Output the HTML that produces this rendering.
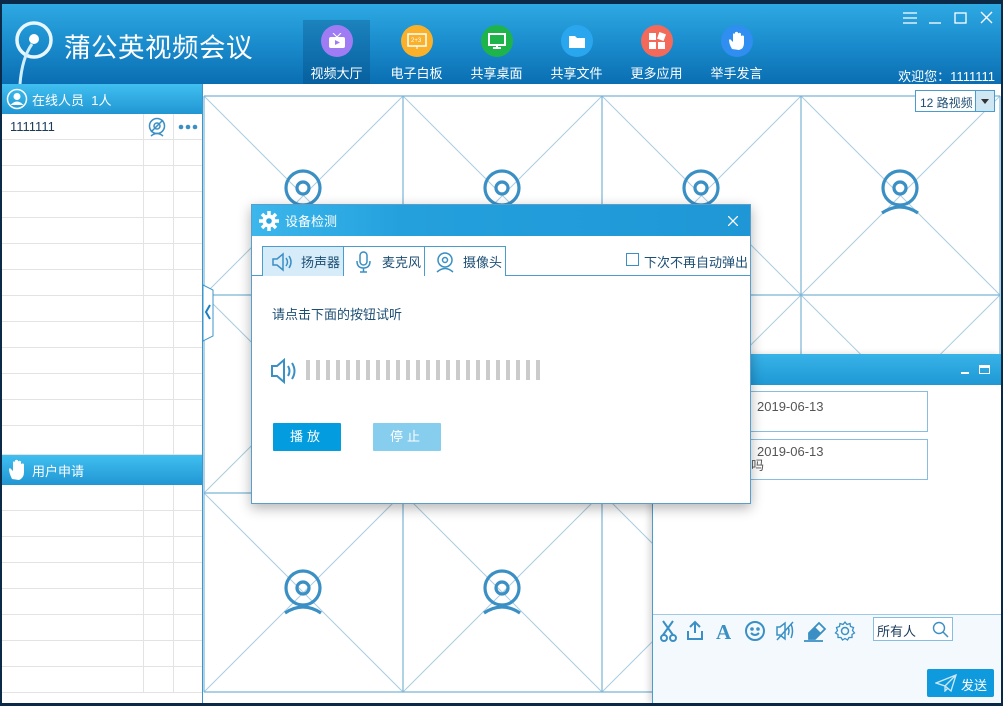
<!DOCTYPE html>
<html><head><meta charset="utf-8"><style>
*{margin:0;padding:0;box-sizing:border-box}
body{width:1003px;height:706px;overflow:hidden;background:#0b2a48;font-family:"Liberation Sans","Noto Sans CJK SC",sans-serif;position:relative}
.abs{position:absolute}
#hdr{left:2px;top:4px;width:999px;height:80px;background:linear-gradient(180deg,#2ea9e2 0%,#1a8ccd 50%,#0a6eb2 100%)}
.tool{position:absolute;top:16px;width:67px;height:64px;text-align:center;color:#fff;font-size:13px}
.tool .c{width:32px;height:32px;border-radius:50%;margin:5px auto 6px;display:flex;align-items:center;justify-content:center}
.lhd{background:linear-gradient(180deg,#40bff0,#2196d3);color:#fff;font-size:13px;height:30px;display:flex;align-items:center}
.row{height:26px;border-bottom:1px solid #e3e3e3;position:relative}
.row:before{content:"";position:absolute;left:141px;top:0;bottom:0;border-left:1px solid #e3e3e3}
.row:after{content:"";position:absolute;left:171px;top:0;bottom:0;border-left:1px solid #e3e3e3}
.tab{position:absolute;top:246px;height:30px;width:82px;border:1px solid #4a9ccc;border-bottom:none;font-size:13px;color:#1d4e73;display:flex;align-items:center;padding-left:8px;gap:6px;background:#fff}
</style></head><body>
<div id="hdr" class="abs">
 <svg class="abs" style="left:10px;top:14px" width="44" height="70" viewBox="0 0 44 70"><circle cx="22" cy="22" r="17" fill="none" stroke="#e8f6ff" stroke-width="3.5"/><circle cx="22" cy="21" r="5" fill="#fff"/><path d="M20 26 Q10 40 8 66" fill="none" stroke="#cfeeff" stroke-width="3"/></svg>
 <div class="abs" style="left:62px;top:22px;color:#fff;font-size:26.5px;letter-spacing:0.5px">蒲公英视频会议</div>
 <div class="abs" style="left:301px;top:16px;width:67px;height:64px;background:rgba(0,50,100,.25)"></div>
 <div class="tool" style="left:301px"><div class="c" style="background:#a07cf4"><svg width="18" height="16"><rect x="1" y="4" width="16" height="11" rx="2" fill="#fff"/><path d="M5 0 L9 4 L13 0" stroke="#fff" fill="none"/><path d="M7 7 L12 9.5 L7 12Z" fill="#a07cf4"/></svg></div>视频大厅</div>
 <div class="tool" style="left:381px"><div class="c" style="background:#fbb02a"><svg width="20" height="16"><rect x="1" y="1" width="18" height="12" fill="none" stroke="#fff" stroke-width="1.5"/><text x="4" y="9" font-size="6" fill="#fff" font-family="Liberation Sans">2+3</text><path d="M10 13v3" stroke="#fff"/></svg></div>电子白板</div>
 <div class="tool" style="left:461px"><div class="c" style="background:#1fb34c"><svg width="18" height="16"><rect x="1" y="1" width="16" height="11" fill="none" stroke="#fff" stroke-width="2"/><path d="M9 12v3M5 15h8" stroke="#fff" stroke-width="2"/></svg></div>共享桌面</div>
 <div class="tool" style="left:541px"><div class="c" style="background:#2aa6ef"><svg width="18" height="15"><path d="M1 2h6l2 2h8v10H1Z" fill="#fff"/></svg></div>共享文件</div>
 <div class="tool" style="left:621px"><div class="c" style="background:#f36a5a"><svg width="18" height="18"><rect x="1" y="1" width="7" height="7" fill="#fff"/><rect x="1" y="10" width="7" height="7" fill="#fff"/><rect x="10" y="10" width="7" height="7" fill="#fff"/><rect x="10" y="1" width="7" height="7" fill="#fff" transform="rotate(20 13.5 4.5)"/></svg></div>更多应用</div>
 <div class="tool" style="left:701px"><div class="c" style="background:#2f8ef0"><svg width="18" height="20"><path d="M4 18 Q1 13 1 9 L2 8 L5 11 V3 Q6 1.5 7 3 V9 V1.5 Q8.5 0 10 1.5V9V2.5Q11.5 1 13 2.5V10V5Q14.5 4 16 5V12Q16 18 11 19Z" fill="#fff"/></svg></div>举手发言</div>
 <svg class="abs" style="left:898px;top:6px" width="100" height="16"><g stroke="#fff" stroke-width="1.3" fill="none"><path d="M3 3H17M3 8H17M3 13H17"/><path d="M29 13H41"/><rect x="55" y="3" width="11" height="10"/><path d="M81 2L92 13M92 2L81 13"/></g></svg>
 <div class="abs" style="right:6px;top:62px;color:#fff;font-size:13px">欢迎您：1111111</div>
</div>
<div class="abs" style="left:2px;top:84px;width:201px;height:619px;background:#fff;border-right:1px solid #3c95cc">
 <div class="lhd"><svg width="22" height="22" style="margin:0 4px"><circle cx="11" cy="11" r="9.5" fill="none" stroke="#fff" stroke-width="1.5"/><circle cx="11" cy="8.5" r="3.5" fill="#fff"/><path d="M4.5 17Q11 10 17.5 17" fill="#fff"/></svg>在线人员&nbsp;&nbsp;1人</div>
 <div class="row" style="font-size:13px;color:#1b3a5a;padding:5px 0 0 8px">1111111
  <svg class="abs" style="left:145px;top:3px" width="20" height="20"><circle cx="10" cy="9" r="7.5" fill="none" stroke="#3a8fc4" stroke-width="1.5"/><circle cx="10" cy="9" r="3" fill="none" stroke="#3a8fc4" stroke-width="1.5"/><path d="M4 15L16 3M4 19Q10 14 16 19" stroke="#3a8fc4" fill="none" stroke-width="1.5"/></svg>
  <svg class="abs" style="left:176px;top:10px" width="20" height="6"><circle cx="3" cy="3" r="2.3" fill="#3a8fc4"/><circle cx="10" cy="3" r="2.3" fill="#3a8fc4"/><circle cx="17" cy="3" r="2.3" fill="#3a8fc4"/></svg></div>
 <div class="row"></div><div class="row"></div><div class="row"></div><div class="row"></div><div class="row"></div><div class="row"></div><div class="row"></div><div class="row"></div><div class="row"></div><div class="row"></div><div class="row"></div><div class="row" style="height:29px"></div>
 <div class="lhd"><svg width="20" height="22" style="margin:0 4px 0 6px"><path d="M4 20 Q1 14 1 10 L2 9 L5 12 V3 Q6 1.5 7 3 V10 V1.5 Q8.5 0 10 1.5V10V2.5Q11.5 1 13 2.5V11V5Q14.5 4 16 5V13Q16 19 11 21Z" fill="#fff"/></svg>用户申请</div>
 <div class="row"></div><div class="row"></div><div class="row"></div><div class="row"></div><div class="row"></div><div class="row"></div><div class="row"></div><div class="row"></div>
</div>
<div class="abs" style="left:203px;top:84px;width:798px;height:619px;background:#fff"></div>
<svg class="abs" style="left:0;top:0" width="1003" height="706">
 <defs><g id="cam" fill="none" stroke="#3a8fc4" stroke-width="3.2"><circle cx="0" cy="0" r="17"/><circle cx="0" cy="0" r="6"/><path d="M-18 25Q0 13 18 25"/></g></defs>
 <g stroke="#a9cde0" stroke-width="1">
  <path d="M204 96L403 295M403 96L204 295M403 96L602 295M602 96L403 295M602 96L801 295M801 96L602 295M801 96L1000 295M1000 96L801 295"/>
  <path d="M204 295L403 493M403 295L204 493M403 295L602 493M602 295L403 493M602 295L801 493M801 295L602 493M801 295L1000 493M1000 295L801 493"/>
  <path d="M204 493L403 692M403 493L204 692M403 493L602 692M602 493L403 692M602 493L801 692M801 493L602 692"/>
 </g>
 <g stroke="#7ab3d3" stroke-width="1.2" fill="none">
  <path d="M204 96H1000M204 295H1000M204 493H1000M204 692H1000M204 96V692M403 96V692M602 96V692M801 96V692M1000 96V692"/>
 </g>
 <use href="#cam" transform="translate(303,188)"/><use href="#cam" transform="translate(502,188)"/><use href="#cam" transform="translate(701,188)"/><use href="#cam" transform="translate(900,188)"/>
 <use href="#cam" transform="translate(303,588)"/><use href="#cam" transform="translate(502,588)"/>
 <path d="M203 285L213 290V336L203 341Z" fill="#fff" stroke="#3c95cc"/>
 <path d="M210 305L206 312L210 319" stroke="#1a7fc0" stroke-width="2" fill="none"/>
</svg>
<div class="abs" style="left:915px;top:90px;width:80px;height:22px;border:1px solid #4a9ccc;background:#fff;font-size:12px;color:#1d4e73;padding:3px 0 0 4px;white-space:nowrap;overflow:hidden">12 路视频</div>
<div class="abs" style="left:975px;top:90px;width:20px;height:22px;border:1px solid #4a9ccc;background:#cfe6f3"><div style="margin:8px auto;width:0;height:0;border:4px solid transparent;border-top:5px solid #333"></div></div>
<div class="abs" style="left:652px;top:354px;width:349px;height:349px;background:#fff;border-left:1px solid #4a9ccc;box-shadow:-3px 0 6px rgba(0,0,0,.15)">
 <div style="height:31px;background:linear-gradient(180deg,#38b3e8,#1f98d4);color:#fff;position:relative"><span class="abs" style="left:308px;top:10px;width:8px;border-bottom:2px solid #fff;height:10px"></span><span class="abs" style="left:326px;top:11px;width:11px;height:9px;border:1.5px solid #fff;border-top-width:3px"></span></div>
 <div class="abs" style="left:0;top:37px;width:275px;height:41px;border:1px solid #88bde0;font-size:13px;color:#555;padding:7px 0 0 103px">2019-06-13</div>
 <div class="abs" style="left:0;top:85px;width:275px;height:41px;border:1px solid #88bde0;font-size:13px;color:#555;padding:5px 0 0 103px;line-height:14px">2019-06-13<br><span style="margin-left:-6px">吗</span></div>
 <div class="abs" style="left:0;top:260px;width:348px;height:89px;background:#f4f9fd;border-top:1px solid #9fc9e4"></div>
 <svg class="abs" style="left:6px;top:265px" width="200" height="24"><g fill="none" stroke="#3a8fc4" stroke-width="2">
  <path d="M4 2L14 16M14 2L4 16"/><circle cx="5" cy="19" r="3"/><circle cx="14" cy="19" r="3"/>
  <path d="M36 4V14M31 8L36 3L41 8M29 12V20H43V12"/>
  <circle cx="96" cy="12" r="9"/><circle cx="93" cy="10" r="0.8"/><circle cx="99" cy="10" r="0.8"/><path d="M92 14Q96 18 100 14"/>
  <path d="M118 8H121L126 4V20L121 16H118Z" stroke-width="1.5"/><path d="M129 8Q131 12 129 16M132 5Q135 12 132 19M118 21L134 3" stroke-width="1.5"/>
  <path d="M150 14L160 4L166 10L156 20H150ZM145 22H164" stroke-width="1.8"/>
  <circle cx="186" cy="12" r="3.5" stroke-width="1.5"/><path d="M186 3L188 5.5L191 4.5L191.5 7.5L194.5 8.5L193.5 11.5L195.5 14L193 15.5L193 18.5L190 18.5L188.5 21L186 19.5L183.5 21L182 18.5L179 18.5L179 15.5L176.5 14L178.5 11.5L177.5 8.5L180.5 7.5L181 4.5L184 5.5Z" stroke-width="1.3"/>
 </g><text x="57" y="20" font-family="Liberation Serif" font-weight="bold" font-size="21" fill="#3a8fc4">A</text><path d="M150 14L156 8L162 14L156 20H150Z" fill="#3a8fc4"/></svg>
 <div class="abs" style="left:220px;top:263px;width:80px;height:24px;border:1px solid #88bde0;background:#fff;font-size:13px;color:#1b3a5a;padding:3px 0 0 3px">所有人<svg class="abs" style="right:3px;top:3px" width="17" height="17"><circle cx="7" cy="7" r="5.5" fill="none" stroke="#3a8fc4" stroke-width="1.4"/><path d="M11 11L16 16" stroke="#3a8fc4" stroke-width="1.5"/></svg></div>
 <div class="abs" style="left:274px;top:315px;width:67px;height:28px;background:#0f9ade;border-radius:2px;color:#fff;font-size:13px;padding:6px 0 0 34px"><svg class="abs" style="left:8px;top:5px" width="22" height="18"><path d="M1 9L21 1L16 17L10 12ZM10 12L21 1M10 12V17L13 14" fill="none" stroke="#cde9f8" stroke-width="1.3"/></svg>发送</div>
</div>
<div class="abs" style="left:251px;top:204px;width:500px;height:300px;background:#fff;border:1px solid #5a9fcc;box-shadow:0 4px 12px rgba(0,0,0,.3)">
 <div style="height:31px;background:linear-gradient(90deg,#3cb7ec,#24a0dd 30%,#1f97d6);color:#fff;font-size:13px;display:flex;align-items:center"><svg width="22" height="22" style="margin:0 5px 0 6px"><circle cx="11" cy="11" r="6.5" fill="#fff"/><g stroke="#fff" stroke-width="3.5"><path d="M11 1V21M1 11H21M4 4L18 18M18 4L4 18"/></g><circle cx="11" cy="11" r="2.8" fill="#2aa5e0"/></svg>设备检测<svg style="margin-left:auto;margin-right:12px" width="10" height="10"><path d="M0 0L10 10M10 0L0 10" stroke="#fff" stroke-width="1.3"/></svg></div>
</div>
<div class="abs" style="left:252px;top:275px;width:498px;border-top:1px solid #4a9ccc"></div>
<div class="tab" style="left:262px;background:#d6ecf9"><svg width="24" height="20"><path d="M2 7H6L12 2V18L6 13H2Z" fill="none" stroke="#3a8fc4" stroke-width="1.5"/><path d="M15 6Q18 10 15 14M18 4Q22 10 18 16" fill="none" stroke="#3a8fc4" stroke-width="1.5"/></svg>扬声器</div>
<div class="tab" style="left:343px"><svg width="24" height="22"><rect x="8" y="1" width="7" height="13" rx="3.5" fill="none" stroke="#3a8fc4" stroke-width="1.5"/><path d="M5 10Q5 17 11.5 17Q18 17 18 10M11.5 17V21M8 21H15" fill="none" stroke="#3a8fc4" stroke-width="1.5"/></svg>麦克风</div>
<div class="tab" style="left:424px"><svg width="24" height="22"><circle cx="12" cy="9" r="7" fill="none" stroke="#3a8fc4" stroke-width="1.5"/><circle cx="12" cy="9" r="2.5" fill="none" stroke="#3a8fc4" stroke-width="1.5"/><path d="M4 21Q12 14 20 21" fill="none" stroke="#3a8fc4" stroke-width="1.5"/></svg>摄像头</div>
<div class="abs" style="left:626px;top:253px;width:13px;height:13px;border:1.5px solid #3a8fc4"></div>
<div class="abs" style="left:644px;top:252px;font-size:13px;color:#1d4e73">下次不再自动弹出</div>
<div class="abs" style="left:272px;top:304px;font-size:13px;color:#1d4e73">请点击下面的按钮试听</div>
<svg class="abs" style="left:270px;top:358px" width="30" height="26"><path d="M2 8H7L14 2V24L7 18H2Z" fill="none" stroke="#3a8fc4" stroke-width="2"/><path d="M18 8Q21 13 18 18M22 5Q27 13 22 21" fill="none" stroke="#3a8fc4" stroke-width="2"/></svg>
<div class="abs" style="left:306px;top:360px;width:240px;height:20px;background:repeating-linear-gradient(90deg,#cbcbcb 0 4px,transparent 4px 10px)"></div>
<div class="abs" style="left:273px;top:423px;width:68px;height:28px;background:#039ddf;border-radius:1px;color:#fff;font-size:13px;text-align:center;line-height:28px;letter-spacing:4px">播放</div>
<div class="abs" style="left:373px;top:423px;width:68px;height:28px;background:#86cdee;border-radius:1px;color:#fff;font-size:13px;text-align:center;line-height:28px;letter-spacing:4px">停止</div>
</body></html>
